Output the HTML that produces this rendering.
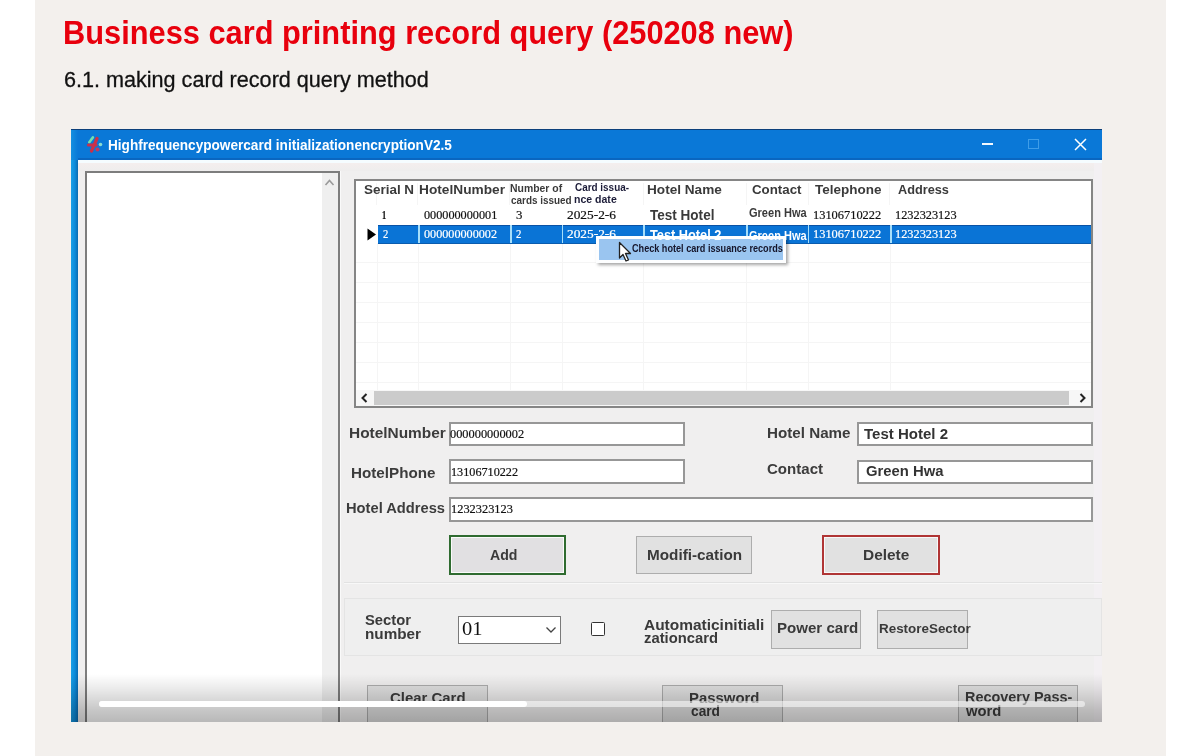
<!DOCTYPE html>
<html><head><meta charset="utf-8">
<style>
html,body{margin:0;padding:0;width:1200px;height:756px;overflow:hidden;background:#fff;font-family:"Liberation Sans", sans-serif;}
.a{position:absolute;box-sizing:border-box;}
.tx{position:absolute;white-space:nowrap;transform-origin:0 0;z-index:5;}
#page{left:35px;top:0;width:1131px;height:756px;background:#f3f0ed;}
#clip{left:0;top:0;width:1102px;height:722px;overflow:hidden;}
.inp{background:#fff;border:2px solid #979797;}
.btn{background:#e1e1e1;border:1px solid #adadad;}
.gl{background:#f5f5f5;}
.sep{background:#a6defa;}
</style></head><body>
<div class="a" id="page"></div>
<div class="a" id="clip">
  <!-- client -->
  <div class="a" style="left:78px;top:160px;width:1024px;height:562px;background:#f0efef"></div>
  <div class="a" style="left:78px;top:163px;width:1024px;height:8px;background:linear-gradient(180deg,#f4eeee,#eeeded)"></div>
  <div class="a" style="left:1094px;top:162px;width:8px;height:560px;background:#f3f0f3"></div>
  <!-- title bar -->
  <div class="a" style="left:71px;top:129px;width:1031px;height:31px;background:#0a78d7;border-top:1px solid #0b3f7a"></div>
  <div class="a" style="left:71px;top:130px;width:7px;height:30px;background:linear-gradient(90deg,#1590e0,#0a78d7)"></div>
  <div class="a" style="left:71px;top:160px;width:7px;height:562px;background:linear-gradient(90deg,#1a9fe6,#0b8bdb 55%,#0a6ab0)"></div>
  <div class="a" style="left:78px;top:158px;width:1024px;height:2px;background:#0a66c0"></div>
  <div class="a" style="left:78px;top:160px;width:1024px;height:3px;background:#f5fcff"></div>
  <!-- icon -->
  <svg class="a" style="left:82px;top:132px;filter:blur(0.7px)" width="26" height="24" viewBox="0 0 26 24">
    <path d="M7.3 10.2 L10.8 5.4" stroke="#6fe0b0" stroke-width="2.6" stroke-linecap="round" fill="none"/>
    <path d="M6.5 13 L14 13" stroke="#c8304e" stroke-width="3.2" stroke-linecap="round" fill="none"/>
    <path d="M15 6.5 L9.5 19" stroke="#cc3048" stroke-width="3.2" stroke-linecap="round" fill="none"/>
    <circle cx="15.5" cy="17.5" r="2" fill="#c03a60"/>
    <circle cx="18.5" cy="12.5" r="1.8" fill="#8adcd0"/>
  </svg>
  <!-- title buttons -->
  <div class="a" style="left:982px;top:143px;width:11px;height:2px;background:#f2f8fe"></div>
  <div class="a" style="left:1028px;top:139px;width:11px;height:10px;border:1px solid #3f9de8"></div>
  <svg class="a" style="left:1074px;top:138px" width="13" height="13" viewBox="0 0 13 13">
    <path d="M1 1 L12 12 M12 1 L1 12" stroke="#fff" stroke-width="1.5"/>
  </svg>
  <!-- listbox -->
  <div class="a" style="left:85px;top:171px;width:255px;height:600px;background:#fff;border:2px solid #7d7d7d"></div>
  <div class="a" style="left:322px;top:173px;width:16px;height:600px;background:#efefef"></div>
  <div class="a" style="left:340px;top:171px;width:1px;height:600px;background:#fafafa"></div>
  <svg class="a" style="left:324px;top:178px" width="11" height="9" viewBox="0 0 11 9">
    <path d="M1.5 7 L5.5 2.5 L9.5 7" stroke="#9a9a9a" stroke-width="1.6" fill="none"/>
  </svg>
  <!-- grid -->
  <div class="a" style="left:354px;top:179px;width:739px;height:229px;background:#fff;border:2px solid #858585"></div>
  <!-- header separators -->
  <div class="a gl" style="left:376px;top:183px;width:1px;height:22px"></div>
  <div class="a gl" style="left:417px;top:183px;width:1px;height:22px"></div>
  <div class="a gl" style="left:509px;top:183px;width:1px;height:22px"></div>
  <div class="a gl" style="left:643px;top:183px;width:1px;height:22px"></div>
  <div class="a gl" style="left:746px;top:183px;width:1px;height:22px"></div>
  <div class="a gl" style="left:808px;top:183px;width:1px;height:22px"></div>
  <div class="a gl" style="left:889px;top:183px;width:1px;height:22px"></div>
  <!-- body grid lines -->
  <div class="a gl" style="left:377px;top:243px;width:1px;height:147px"></div>
  <div class="a gl" style="left:418px;top:243px;width:1px;height:147px"></div>
  <div class="a gl" style="left:510px;top:243px;width:1px;height:147px"></div>
  <div class="a gl" style="left:562px;top:243px;width:1px;height:147px"></div>
  <div class="a gl" style="left:643px;top:243px;width:1px;height:147px"></div>
  <div class="a gl" style="left:746px;top:243px;width:1px;height:147px"></div>
  <div class="a gl" style="left:808px;top:243px;width:1px;height:147px"></div>
  <div class="a gl" style="left:890px;top:243px;width:1px;height:147px"></div>
  <div class="a gl" style="left:356px;top:262px;width:735px;height:1px"></div>
  <div class="a gl" style="left:356px;top:282px;width:735px;height:1px"></div>
  <div class="a gl" style="left:356px;top:302px;width:735px;height:1px"></div>
  <div class="a gl" style="left:356px;top:322px;width:735px;height:1px"></div>
  <div class="a gl" style="left:356px;top:342px;width:735px;height:1px"></div>
  <div class="a gl" style="left:356px;top:362px;width:735px;height:1px"></div>
  <div class="a gl" style="left:356px;top:382px;width:735px;height:1px"></div>
  <!-- selected row -->
  <div class="a" style="left:378px;top:225px;width:713px;height:18.5px;background:#0a74d6;border-top:1px solid #0a52a5;border-bottom:1px solid #0a5cae"></div>
  <div class="a sep" style="left:418px;top:225px;width:2px;height:18px"></div>
  <div class="a sep" style="left:510px;top:225px;width:2px;height:18px"></div>
  <div class="a sep" style="left:562px;top:225px;width:1px;height:18px"></div>
  <div class="a sep" style="left:643px;top:225px;width:2px;height:18px"></div>
  <div class="a sep" style="left:746px;top:225px;width:2px;height:18px"></div>
  <div class="a sep" style="left:808px;top:225px;width:1px;height:18px"></div>
  <div class="a sep" style="left:890px;top:225px;width:2px;height:18px"></div>
  <svg class="a" style="left:367px;top:228px" width="10" height="13" viewBox="0 0 10 13">
    <path d="M0.5 0.5 L9 6.5 L0.5 12.5 Z" fill="#000"/>
  </svg>
  <!-- h scrollbar -->
  <div class="a" style="left:356px;top:390px;width:735px;height:16px;background:#f7f7f7"></div>
  <div class="a" style="left:374px;top:391px;width:695px;height:14px;background:#cbcbcb"></div>
  <svg class="a" style="left:359px;top:392px" width="11" height="12" viewBox="0 0 11 12">
    <path d="M7.5 2 L3.5 6 L7.5 10" stroke="#222" stroke-width="2" fill="none"/>
  </svg>
  <svg class="a" style="left:1077px;top:392px" width="11" height="12" viewBox="0 0 11 12">
    <path d="M3.5 2 L7.5 6 L3.5 10" stroke="#222" stroke-width="2" fill="none"/>
  </svg>
  <!-- popup -->
  <div class="a" style="left:596px;top:236px;width:190px;height:27px;background:#9ac5f0;border:3px solid #fdfeff;box-shadow:2px 2px 3px rgba(0,0,0,0.35)"></div>
  <svg class="a" style="left:618px;top:241px;z-index:6" width="18" height="22" viewBox="0 0 18 22">
    <path d="M1.5 1.5 L1.5 17 L5 13.5 L8 20 L10.5 19 L7.5 12.5 L12.5 12.5 Z" fill="#fff" stroke="#222" stroke-width="1.3" stroke-linejoin="round"/>
  </svg>
  <!-- inputs -->
  <div class="a inp" style="left:449px;top:422px;width:236px;height:24px"></div>
  <div class="a inp" style="left:449px;top:459px;width:236px;height:25px"></div>
  <div class="a inp" style="left:449px;top:497px;width:644px;height:25px"></div>
  <div class="a inp" style="left:857px;top:422px;width:236px;height:24px"></div>
  <div class="a inp" style="left:857px;top:460px;width:236px;height:24px"></div>
  <!-- buttons row -->
  <div class="a" style="left:449px;top:535px;width:117px;height:40px;background:#e1e0e2;border:2px solid #2f6b30;box-shadow:inset 0 0 0 1px #fafafa"></div>
  <div class="a btn" style="left:636px;top:536px;width:116px;height:38px"></div>
  <div class="a" style="left:822px;top:535px;width:118px;height:40px;background:#e1e1e1;border:2px solid #b03535;box-shadow:inset 0 0 0 1px #f8f8f8"></div>
  <div class="a" style="left:344px;top:582px;width:758px;height:1px;background:#e2e2e2"></div>
  <div class="a" style="left:344px;top:583px;width:758px;height:1px;background:#f8f8f8"></div>
  <!-- group -->
  <div class="a" style="left:344px;top:598px;width:758px;height:58px;background:#efefef;border:1px solid #e4e4e4"></div>
  <div class="a" style="left:458px;top:616px;width:103px;height:28px;background:#fff;border:1px solid #7a7a7a"></div>
  <svg class="a" style="left:545px;top:626px" width="12" height="8" viewBox="0 0 12 8">
    <path d="M1.5 1.5 L6 6 L10.5 1.5" stroke="#444" stroke-width="1.3" fill="none"/>
  </svg>
  <div class="a" style="left:591px;top:622px;width:14px;height:14px;background:#fff;border:1.5px solid #333;border-radius:1.5px"></div>
  <div class="a btn" style="left:771px;top:610px;width:90px;height:39px"></div>
  <div class="a btn" style="left:877px;top:610px;width:91px;height:39px"></div>
  <!-- bottom buttons -->
  <div class="a btn" style="left:367px;top:685px;width:121px;height:60px"></div>
  <div class="a btn" style="left:662px;top:685px;width:121px;height:60px"></div>
  <div class="a btn" style="left:958px;top:685px;width:120px;height:60px"></div>
</div>
<div id="t_title" class="tx" style="left:63.20px;top:16.06px;font-size:33px;line-height:33px;font-weight:700;color:#e8000d;font-family:'Liberation Sans', sans-serif;transform:scaleX(0.9329)">Business card printing record query (250208 new)</div>
<div id="t_sub" class="tx" style="left:64.10px;top:69.42px;font-size:22.3px;line-height:22.3px;font-weight:400;color:#111;font-family:'Liberation Sans', sans-serif;transform:scaleX(0.9684);-webkit-text-stroke:0.3px currentColor">6.1. making card record query method</div>
<div id="t_win" class="tx" style="left:108.26px;top:138.12px;font-size:14.5px;line-height:14.5px;font-weight:700;color:#fff;font-family:'Liberation Sans', sans-serif;transform:scaleX(0.9381)">Highfrequencypowercard initializationencryptionV2.5</div>
<div id="h1" class="tx" style="left:364.10px;top:182.95px;font-size:13.4px;line-height:13.4px;font-weight:700;color:#3a3a3a;font-family:'Liberation Sans', sans-serif;transform:scaleX(1.0042)">Serial N</div>
<div id="h2" class="tx" style="left:419.10px;top:183.15px;font-size:13.4px;line-height:13.4px;font-weight:700;color:#3a3a3a;font-family:'Liberation Sans', sans-serif;transform:scaleX(1.0230)">HotelNumber</div>
<div id="h3a" class="tx" style="left:509.88px;top:184.06px;font-size:10.2px;line-height:10.2px;font-weight:700;color:#3a3a3a;font-family:'Liberation Sans', sans-serif;transform:scaleX(1.0234)">Number of</div>
<div id="h3b" class="tx" style="left:510.78px;top:196.06px;font-size:10.2px;line-height:10.2px;font-weight:700;color:#3a3a3a;font-family:'Liberation Sans', sans-serif;transform:scaleX(0.9730)">cards issued</div>
<div id="h4a" class="tx" style="left:575.00px;top:183.36px;font-size:10.2px;line-height:10.2px;font-weight:700;color:#1c1c38;font-family:'Liberation Sans', sans-serif;transform:scaleX(0.9732)">Card issua-</div>
<div id="h4b" class="tx" style="left:574.10px;top:194.66px;font-size:10.2px;line-height:10.2px;font-weight:700;color:#1c1c38;font-family:'Liberation Sans', sans-serif;transform:scaleX(1.0341)">nce date</div>
<div id="h5" class="tx" style="left:646.54px;top:183.45px;font-size:13.4px;line-height:13.4px;font-weight:700;color:#3a3a3a;font-family:'Liberation Sans', sans-serif;transform:scaleX(1.0159)">Hotel Name</div>
<div id="h6" class="tx" style="left:752.00px;top:183.45px;font-size:13.4px;line-height:13.4px;font-weight:700;color:#3a3a3a;font-family:'Liberation Sans', sans-serif;transform:scaleX(0.9937)">Contact</div>
<div id="h7" class="tx" style="left:814.72px;top:183.45px;font-size:13.4px;line-height:13.4px;font-weight:700;color:#3a3a3a;font-family:'Liberation Sans', sans-serif;transform:scaleX(1.0068)">Telephone</div>
<div id="h8" class="tx" style="left:898.06px;top:183.45px;font-size:13.4px;line-height:13.4px;font-weight:700;color:#3a3a3a;font-family:'Liberation Sans', sans-serif;transform:scaleX(0.9502)">Address</div>
<div id="r1a" class="tx" style="left:382.04px;top:208.53px;font-size:12.5px;line-height:12.5px;font-weight:700;color:#111;font-family:'Liberation Serif', serif;transform:scaleX(0.6720);-webkit-text-stroke:0.2px currentColor">1</div>
<div id="r1b" class="tx" style="left:423.78px;top:208.53px;font-size:12.5px;line-height:12.5px;font-weight:400;color:#111;font-family:'Liberation Serif', serif;transform:scaleX(0.9765);-webkit-text-stroke:0.2px currentColor">000000000001</div>
<div id="r1c" class="tx" style="left:515.78px;top:208.53px;font-size:12.5px;line-height:12.5px;font-weight:400;color:#111;font-family:'Liberation Serif', serif;transform:scaleX(1.0240);-webkit-text-stroke:0.2px currentColor">3</div>
<div id="r1d" class="tx" style="left:567.00px;top:208.53px;font-size:12.5px;line-height:12.5px;font-weight:400;color:#111;font-family:'Liberation Serif', serif;transform:scaleX(1.0692);-webkit-text-stroke:0.2px currentColor">2025-2-6</div>
<div id="r1e" class="tx" style="left:649.56px;top:207.58px;font-size:14.2px;line-height:14.2px;font-weight:700;color:#3a3a3a;font-family:'Liberation Sans', sans-serif;transform:scaleX(0.9539)">Test Hotel</div>
<div id="r1f" class="tx" style="left:749.44px;top:207.34px;font-size:12px;line-height:12px;font-weight:700;color:#3a3a3a;font-family:'Liberation Sans', sans-serif;transform:scaleX(0.9190)">Green Hwa</div>
<div id="r1g" class="tx" style="left:813.10px;top:208.53px;font-size:12.5px;line-height:12.5px;font-weight:400;color:#111;font-family:'Liberation Serif', serif;transform:scaleX(0.9920);-webkit-text-stroke:0.2px currentColor">13106710222</div>
<div id="r1h" class="tx" style="left:895.10px;top:208.53px;font-size:12.5px;line-height:12.5px;font-weight:400;color:#111;font-family:'Liberation Serif', serif;transform:scaleX(0.9854);-webkit-text-stroke:0.2px currentColor">1232323123</div>
<div id="r2a" class="tx" style="left:382.72px;top:227.73px;font-size:12.5px;line-height:12.5px;font-weight:400;color:#fff;font-family:'Liberation Serif', serif;transform:scaleX(0.8480);-webkit-text-stroke:0.2px currentColor">2</div>
<div id="r2b" class="tx" style="left:423.78px;top:227.73px;font-size:12.5px;line-height:12.5px;font-weight:400;color:#fff;font-family:'Liberation Serif', serif;transform:scaleX(0.9733);-webkit-text-stroke:0.2px currentColor">000000000002</div>
<div id="r2c" class="tx" style="left:515.78px;top:227.73px;font-size:12.5px;line-height:12.5px;font-weight:400;color:#fff;font-family:'Liberation Serif', serif;transform:scaleX(0.8640);-webkit-text-stroke:0.2px currentColor">2</div>
<div id="r2d" class="tx" style="left:567.00px;top:227.73px;font-size:12.5px;line-height:12.5px;font-weight:400;color:#fff;font-family:'Liberation Serif', serif;transform:scaleX(1.0692);-webkit-text-stroke:0.2px currentColor">2025-2-6</div>
<div id="r2e" class="tx" style="left:649.56px;top:227.98px;font-size:14.2px;line-height:14.2px;font-weight:700;color:#fff;font-family:'Liberation Sans', sans-serif;transform:scaleX(0.8998)">Test Hotel 2</div>
<div id="r2f" class="tx" style="left:749.44px;top:229.84px;font-size:12px;line-height:12px;font-weight:700;color:#fff;font-family:'Liberation Sans', sans-serif;transform:scaleX(0.9190)">Green Hwa</div>
<div id="r2g" class="tx" style="left:813.10px;top:227.73px;font-size:12.5px;line-height:12.5px;font-weight:400;color:#fff;font-family:'Liberation Serif', serif;transform:scaleX(0.9920);-webkit-text-stroke:0.2px currentColor">13106710222</div>
<div id="r2h" class="tx" style="left:895.10px;top:227.73px;font-size:12.5px;line-height:12.5px;font-weight:400;color:#fff;font-family:'Liberation Serif', serif;transform:scaleX(0.9854);-webkit-text-stroke:0.2px currentColor">1232323123</div>
<div id="popup" class="tx" style="left:632.00px;top:242.69px;font-size:11px;line-height:11px;font-weight:700;color:#15152a;font-family:'Liberation Sans', sans-serif;transform:scaleX(0.8278)">Check hotel card issuance records</div>
<div id="l1" class="tx" style="left:349.10px;top:424.78px;font-size:15.5px;line-height:15.5px;font-weight:700;color:#3c3c3c;font-family:'Liberation Sans', sans-serif;transform:scaleX(0.9948)">HotelNumber</div>
<div id="l2" class="tx" style="left:351.10px;top:464.88px;font-size:15.5px;line-height:15.5px;font-weight:700;color:#3c3c3c;font-family:'Liberation Sans', sans-serif;transform:scaleX(0.9816)">HotelPhone</div>
<div id="l3" class="tx" style="left:345.60px;top:499.68px;font-size:15.5px;line-height:15.5px;font-weight:700;color:#3c3c3c;font-family:'Liberation Sans', sans-serif;transform:scaleX(0.9473)">Hotel Address</div>
<div id="l4" class="tx" style="left:767.10px;top:425.28px;font-size:15.5px;line-height:15.5px;font-weight:700;color:#3c3c3c;font-family:'Liberation Sans', sans-serif;transform:scaleX(0.9795)">Hotel Name</div>
<div id="l5" class="tx" style="left:767.10px;top:460.88px;font-size:15.5px;line-height:15.5px;font-weight:700;color:#3c3c3c;font-family:'Liberation Sans', sans-serif;transform:scaleX(0.9708)">Contact</div>
<div id="i1" class="tx" style="left:450.44px;top:427.53px;font-size:12.5px;line-height:12.5px;font-weight:400;color:#111;font-family:'Liberation Serif', serif;transform:scaleX(0.9883);-webkit-text-stroke:0.2px currentColor">000000000002</div>
<div id="i2" class="tx" style="left:451.10px;top:465.83px;font-size:12.5px;line-height:12.5px;font-weight:400;color:#111;font-family:'Liberation Serif', serif;transform:scaleX(0.9752);-webkit-text-stroke:0.2px currentColor">13106710222</div>
<div id="i3" class="tx" style="left:451.10px;top:503.13px;font-size:12.5px;line-height:12.5px;font-weight:400;color:#111;font-family:'Liberation Serif', serif;transform:scaleX(0.9905);-webkit-text-stroke:0.2px currentColor">1232323123</div>
<div id="i4" class="tx" style="left:864.00px;top:426.48px;font-size:15.5px;line-height:15.5px;font-weight:700;color:#333;font-family:'Liberation Sans', sans-serif;transform:scaleX(0.9688)">Test Hotel 2</div>
<div id="i5" class="tx" style="left:866.10px;top:462.88px;font-size:15.5px;line-height:15.5px;font-weight:700;color:#333;font-family:'Liberation Sans', sans-serif;transform:scaleX(0.9573)">Green Hwa</div>
<div id="b1" class="tx" style="left:489.78px;top:546.68px;font-size:15.5px;line-height:15.5px;font-weight:700;color:#3a3a3a;font-family:'Liberation Sans', sans-serif;transform:scaleX(0.9108)">Add</div>
<div id="b2" class="tx" style="left:647.10px;top:546.88px;font-size:15.5px;line-height:15.5px;font-weight:700;color:#3a3a3a;font-family:'Liberation Sans', sans-serif;transform:scaleX(0.9865)">Modifi-cation</div>
<div id="b3" class="tx" style="left:862.85px;top:546.88px;font-size:15.5px;line-height:15.5px;font-weight:700;color:#3a3a3a;font-family:'Liberation Sans', sans-serif;transform:scaleX(0.9951)">Delete</div>
<div id="s1" class="tx" style="left:365.10px;top:613.22px;font-size:14.5px;line-height:14.5px;font-weight:700;color:#3a3a3a;font-family:'Liberation Sans', sans-serif;transform:scaleX(1.0195)">Sector</div>
<div id="s2" class="tx" style="left:365.10px;top:627.22px;font-size:14.5px;line-height:14.5px;font-weight:700;color:#3a3a3a;font-family:'Liberation Sans', sans-serif;transform:scaleX(1.0535)">number</div>
<div id="s3" class="tx" style="left:461.60px;top:619.93px;font-size:18px;line-height:18px;font-weight:400;color:#111;font-family:'Liberation Serif', serif;transform:scaleX(1.1383)">01</div>
<div id="s4" class="tx" style="left:644.22px;top:618.12px;font-size:14.5px;line-height:14.5px;font-weight:700;color:#3a3a3a;font-family:'Liberation Sans', sans-serif;transform:scaleX(1.0667)">Automaticinitiali</div>
<div id="s5" class="tx" style="left:644.22px;top:630.72px;font-size:14.5px;line-height:14.5px;font-weight:700;color:#3a3a3a;font-family:'Liberation Sans', sans-serif;transform:scaleX(1.0204)">zationcard</div>
<div id="s6" class="tx" style="left:776.88px;top:620.30px;font-size:15px;line-height:15px;font-weight:700;color:#3a3a3a;font-family:'Liberation Sans', sans-serif;transform:scaleX(1.0046)">Power card</div>
<div id="s7" class="tx" style="left:878.88px;top:621.57px;font-size:13.5px;line-height:13.5px;font-weight:700;color:#3a3a3a;font-family:'Liberation Sans', sans-serif;transform:scaleX(0.9938)">RestoreSector</div>
<div id="c1" class="tx" style="left:389.85px;top:689.88px;font-size:15.5px;line-height:15.5px;font-weight:700;color:#3a3a3a;font-family:'Liberation Sans', sans-serif;transform:scaleX(0.9637)">Clear Card</div>
<div id="c2" class="tx" style="left:689.26px;top:689.58px;font-size:15.5px;line-height:15.5px;font-weight:700;color:#3a3a3a;font-family:'Liberation Sans', sans-serif;transform:scaleX(0.9621)">Password</div>
<div id="c3" class="tx" style="left:691.06px;top:703.38px;font-size:15.5px;line-height:15.5px;font-weight:700;color:#3a3a3a;font-family:'Liberation Sans', sans-serif;transform:scaleX(0.8850)">card</div>
<div id="c4" class="tx" style="left:964.66px;top:689.38px;font-size:15.5px;line-height:15.5px;font-weight:700;color:#3a3a3a;font-family:'Liberation Sans', sans-serif;transform:scaleX(0.9304)">Recovery Pass-</div>
<div id="c5" class="tx" style="left:965.56px;top:702.88px;font-size:15.5px;line-height:15.5px;font-weight:700;color:#3a3a3a;font-family:'Liberation Sans', sans-serif;transform:scaleX(0.9549)">word</div>
<!-- video overlay -->
<div class="a" style="left:71px;top:674px;width:1031px;height:48px;z-index:9;background:linear-gradient(180deg,rgba(0,0,0,0) 0%,rgba(0,0,0,0.08) 30%,rgba(0,0,0,0.22) 75%,rgba(0,0,0,0.28) 100%)"></div>
<div class="a" style="left:99px;top:701px;width:986px;height:6px;z-index:10;border-radius:3px;background:rgba(255,255,255,0.55)"></div>
<div class="a" style="left:99px;top:701px;width:428px;height:6px;z-index:11;border-radius:3px;background:#fff"></div>
</body></html>
